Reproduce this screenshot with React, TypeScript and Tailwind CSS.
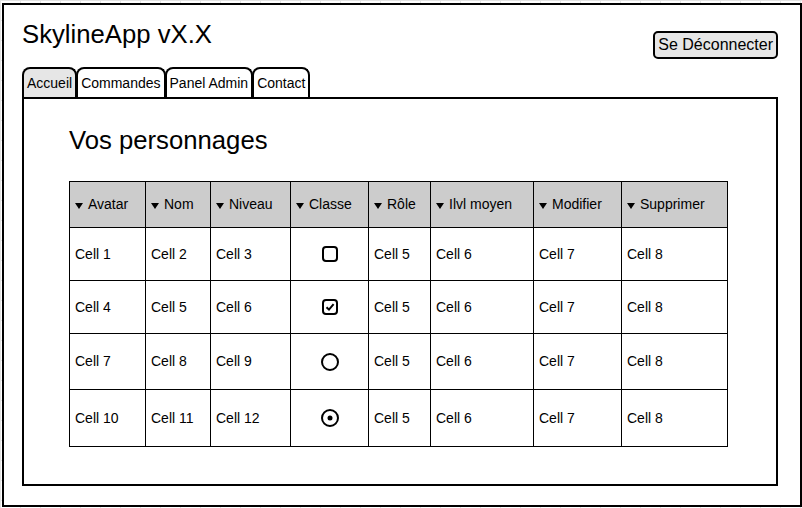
import React from "react";

const FONT = { fontFamily: '"Liberation Sans", Arial, sans-serif' };

function Tri() {
  return (
    <svg width="8" height="6" viewBox="0 0 8 6" className="inline-block mr-[5px] align-baseline">
      <polygon points="0,0 8,0 4,6" fill="#000" />
    </svg>
  );
}

function Checkbox({ checked }: { checked?: boolean }) {
  return (
    <svg width="16" height="16" viewBox="0 0 16 16" className="block mx-auto">
      <rect x="1" y="1" width="14" height="14" rx="3" fill="#fff" stroke="#000" strokeWidth="2" />
      {checked && <path d="M4.5 8.2 L7 10.6 L11.6 5.2" fill="none" stroke="#000" strokeWidth="2" />}
    </svg>
  );
}

function Radio({ checked }: { checked?: boolean }) {
  return (
    <svg width="18" height="18" viewBox="0 0 18 18" className="block mx-auto">
      <circle cx="9" cy="9" r="8" fill="#fff" stroke="#000" strokeWidth="2" />
      {checked && <circle cx="9" cy="9" r="2.5" fill="#000" />}
    </svg>
  );
}

const headers = ["Avatar", "Nom", "Niveau", "Classe", "Rôle", "Ilvl moyen", "Modifier", "Supprimer"];
const widths = ["w-[76px]", "w-[65px]", "w-[80px]", "w-[78px]", "w-[62px]", "w-[103px]", "w-[88px]", "w-[106px]"];

const rows: { cells: string[]; icon: React.ReactNode; h: string }[] = [
  { cells: ["Cell 1", "Cell 2", "Cell 3"], icon: <Checkbox />, h: "h-[53px]" },
  { cells: ["Cell 4", "Cell 5", "Cell 6"], icon: <Checkbox checked />, h: "h-[53px]" },
  { cells: ["Cell 7", "Cell 8", "Cell 9"], icon: <Radio />, h: "h-[56px]" },
  { cells: ["Cell 10", "Cell 11", "Cell 12"], icon: <Radio checked />, h: "h-[57px]" },
];

export default function App() {
  return (
    <div
      className="w-[802px] h-[508px] pt-[3px] pl-[2px] bg-white bg-[linear-gradient(to_right,#e3e3e3_1px,transparent_1px),linear-gradient(to_bottom,#e3e3e3_1px,transparent_1px)] bg-[size:20px_20px] text-black"
      style={FONT}
    >
      <div className="w-[800px] h-[504px] border-2 border-black bg-white pl-[18px] pr-[22px] pt-[14px] flex flex-col">
        <div className="flex justify-between items-start">
          <h1 className="text-[25.7px] leading-[30px] font-normal">SkylineApp vX.X</h1>
          <button className="mt-[12px] h-[28px] px-[3px] border-2 border-black rounded-[5px] bg-[#e6e6e6] text-[16px] leading-none">
            Se Déconnecter
          </button>
        </div>
        <div className="mt-[8px] flex h-[30px] items-stretch">
          {["Accueil", "Commandes", "Panel Admin", "Contact"].map((t, i) => (
            <div
              key={t}
              className={`flex items-center px-[3px] border-2 border-b-0 border-black rounded-t-[8px] text-[14px] leading-none ${
                i === 0 ? "bg-[#e6e6e6]" : "bg-white -ml-[1px]"
              }`}
            >
              {t}
            </div>
          ))}
        </div>
        <div className="h-[389px] border-2 border-black pl-[45px] pt-[26px]">
          <h2 className="text-[25.7px] leading-[30px] font-normal">Vos personnages</h2>
          <table className="mt-[26px] w-[659px] table-fixed border-collapse border border-black text-[14px]">
            <colgroup>
              {widths.map((w, i) => (
                <col key={i} className={w} />
              ))}
            </colgroup>
            <thead>
              <tr className="h-[46px] bg-[#cccccc]">
                {headers.map((h) => (
                  <th key={h} className="border border-black text-left font-normal pl-[5px] align-middle whitespace-nowrap">
                    <Tri />
                    {h}
                  </th>
                ))}
              </tr>
            </thead>
            <tbody>
              {rows.map((r, i) => (
                <tr key={i} className={r.h}>
                  {r.cells.map((c) => (
                    <td key={c} className="border border-black pl-[5px] align-middle">
                      {c}
                    </td>
                  ))}
                  <td className="border border-black align-middle">{r.icon}</td>
                  <td className="border border-black pl-[5px] align-middle">Cell 5</td>
                  <td className="border border-black pl-[5px] align-middle">Cell 6</td>
                  <td className="border border-black pl-[5px] align-middle">Cell 7</td>
                  <td className="border border-black pl-[5px] align-middle">Cell 8</td>
                </tr>
              ))}
            </tbody>
          </table>
        </div>
      </div>
    </div>
  );
}
